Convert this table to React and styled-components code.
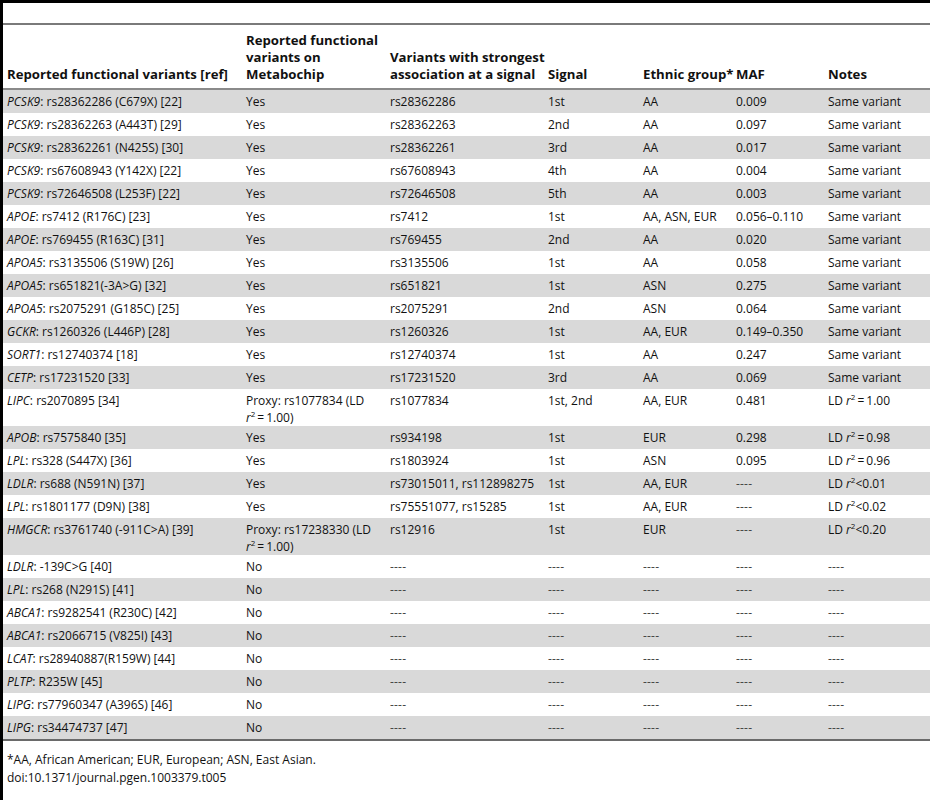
import React from 'react';
import styled, { createGlobalStyle } from 'styled-components';

const Global = createGlobalStyle`
  body {
    margin: 0;
    background: #fff;
    font-family: "Open Sans", "Liberation Sans", sans-serif;
    color: #111;
  }
`;

const Page = styled.div`
  width: 927px;
  height: 789px;
  border-top: 3px solid #000;
  border-left: 3px solid #000;
  padding-top: 20px;
  font-size: 12px;
`;

const Table = styled.table`
  width: 927px;
  border-collapse: collapse;
  table-layout: fixed;
  border-top: 2px solid #7a7a7a;
  border-bottom: 2px solid #6a6a6a;
`;

const HeadCell = styled.th`
  text-align: left;
  vertical-align: bottom;
  font-weight: 700;
  font-size: 13.2px;
  line-height: 17px;
  white-space: nowrap;
  padding: 7px 4px 5px 4px;
  border-bottom: 2px solid #8a8a8a;
`;

const Row = styled.tr`
  background: ${(p) => (p.$shade ? '#d9d9d9' : '#fff')};
`;

const Cell = styled.td`
  vertical-align: top;
  line-height: ${(p) => (p.$wrap ? '17px' : '13px')};
  white-space: nowrap;
  padding: ${(p) => (p.$wrap ? '3px 4px 0 4px' : '5px 4px')};
`;

const Gene = styled.i`
  font-style: italic;
`;

const Sup = styled.sup`
  font-size: 8px;
  line-height: 0;
  vertical-align: 5px;
`;

const Dash = styled.span`
  color: #444;
  letter-spacing: 0.2px;
`;

const Footnote = styled.div`
  padding: 10px 4px 0 4px;
  line-height: 18px;
`;

const widths = [239, 144, 158, 95, 93, 92, 106];

const r2 = (op, v) => (
  <>
    LD <i>r</i>
    <Sup>2</Sup>
    {op === '=' ? '\u2009=\u2009' : '<'}
    {v}
  </>
);

const proxy = (rs) => ({
  wrap: true,
  body: (
    <>
      Proxy: {rs} (LD
      <br />
      <i>r</i>
      <Sup>2</Sup>
      {'\u2009=\u20091.00)'}
    </>
  ),
});

const D = <Dash>----</Dash>;

const rows = [
  ['PCSK9', ': rs28362286 (C679X) [22]', 'Yes', 'rs28362286', '1st', 'AA', '0.009', 'Same variant'],
  ['PCSK9', ': rs28362263 (A443T) [29]', 'Yes', 'rs28362263', '2nd', 'AA', '0.097', 'Same variant'],
  ['PCSK9', ': rs28362261 (N425S) [30]', 'Yes', 'rs28362261', '3rd', 'AA', '0.017', 'Same variant'],
  ['PCSK9', ': rs67608943 (Y142X) [22]', 'Yes', 'rs67608943', '4th', 'AA', '0.004', 'Same variant'],
  ['PCSK9', ': rs72646508 (L253F) [22]', 'Yes', 'rs72646508', '5th', 'AA', '0.003', 'Same variant'],
  ['APOE', ': rs7412 (R176C) [23]', 'Yes', 'rs7412', '1st', 'AA, ASN, EUR', '0.056\u20130.110', 'Same variant'],
  ['APOE', ': rs769455 (R163C) [31]', 'Yes', 'rs769455', '2nd', 'AA', '0.020', 'Same variant'],
  ['APOA5', ': rs3135506 (S19W) [26]', 'Yes', 'rs3135506', '1st', 'AA', '0.058', 'Same variant'],
  ['APOA5', ': rs651821(-3A>G) [32]', 'Yes', 'rs651821', '1st', 'ASN', '0.275', 'Same variant'],
  ['APOA5', ': rs2075291 (G185C) [25]', 'Yes', 'rs2075291', '2nd', 'ASN', '0.064', 'Same variant'],
  ['GCKR', ': rs1260326 (L446P) [28]', 'Yes', 'rs1260326', '1st', 'AA, EUR', '0.149\u20130.350', 'Same variant'],
  ['SORT1', ': rs12740374 [18]', 'Yes', 'rs12740374', '1st', 'AA', '0.247', 'Same variant'],
  ['CETP', ': rs17231520 [33]', 'Yes', 'rs17231520', '3rd', 'AA', '0.069', 'Same variant'],
  ['LIPC', ': rs2070895 [34]', proxy('rs1077834'), 'rs1077834', '1st, 2nd', 'AA, EUR', '0.481', r2('=', '1.00')],
  ['APOB', ': rs7575840 [35]', 'Yes', 'rs934198', '1st', 'EUR', '0.298', r2('=', '0.98')],
  ['LPL', ': rs328 (S447X) [36]', 'Yes', 'rs1803924', '1st', 'ASN', '0.095', r2('=', '0.96')],
  ['LDLR', ': rs688 (N591N) [37]', 'Yes', 'rs73015011, rs112898275', '1st', 'AA, EUR', D, r2('<', '0.01')],
  ['LPL', ': rs1801177 (D9N) [38]', 'Yes', 'rs75551077, rs15285', '1st', 'AA, EUR', D, r2('<', '0.02')],
  ['HMGCR', ': rs3761740 (-911C>A) [39]', proxy('rs17238330'), 'rs12916', '1st', 'EUR', D, r2('<', '0.20')],
  ['LDLR', ': -139C>G [40]', 'No', D, D, D, D, D],
  ['LPL', ': rs268 (N291S) [41]', 'No', D, D, D, D, D],
  ['ABCA1', ': rs9282541 (R230C) [42]', 'No', D, D, D, D, D],
  ['ABCA1', ': rs2066715 (V825I) [43]', 'No', D, D, D, D, D],
  ['LCAT', ': rs28940887(R159W) [44]', 'No', D, D, D, D, D],
  ['PLTP', ': R235W [45]', 'No', D, D, D, D, D],
  ['LIPG', ': rs77960347 (A396S) [46]', 'No', D, D, D, D, D],
  ['LIPG', ': rs34474737 [47]', 'No', D, D, D, D, D],
];

const heads = [
  ['Reported functional variants [ref]'],
  ['Reported functional', 'variants on', 'Metabochip'],
  ['Variants with strongest', 'association at a signal'],
  ['Signal'],
  ['Ethnic group*'],
  ['MAF'],
  ['Notes'],
];

export default function App() {
  return (
    <>
      <Global />
      <Page>
        <Table>
          <colgroup>
            {widths.map((w, i) => (
              <col key={i} style={{ width: w }} />
            ))}
          </colgroup>
          <thead>
            <tr>
              {heads.map((lines, i) => (
                <HeadCell key={i}>
                  {lines.map((l, j) => (
                    <React.Fragment key={j}>
                      {j > 0 && <br />}
                      {l}
                    </React.Fragment>
                  ))}
                </HeadCell>
              ))}
            </tr>
          </thead>
          <tbody>
            {rows.map(([gene, rest, ...cols], i) => (
              <Row key={i} $shade={i % 2 === 0}>
                <Cell>
                  <Gene>{gene}</Gene>
                  {rest}
                </Cell>
                {cols.map((c, j) =>
                  c && c.wrap ? (
                    <Cell key={j} $wrap>
                      {c.body}
                    </Cell>
                  ) : (
                    <Cell key={j}>{c}</Cell>
                  )
                )}
              </Row>
            ))}
          </tbody>
        </Table>
        <Footnote>
          *AA, African American; EUR, European; ASN, East Asian.
          <br />
          doi:10.1371/journal.pgen.1003379.t005
        </Footnote>
      </Page>
    </>
  );
}
